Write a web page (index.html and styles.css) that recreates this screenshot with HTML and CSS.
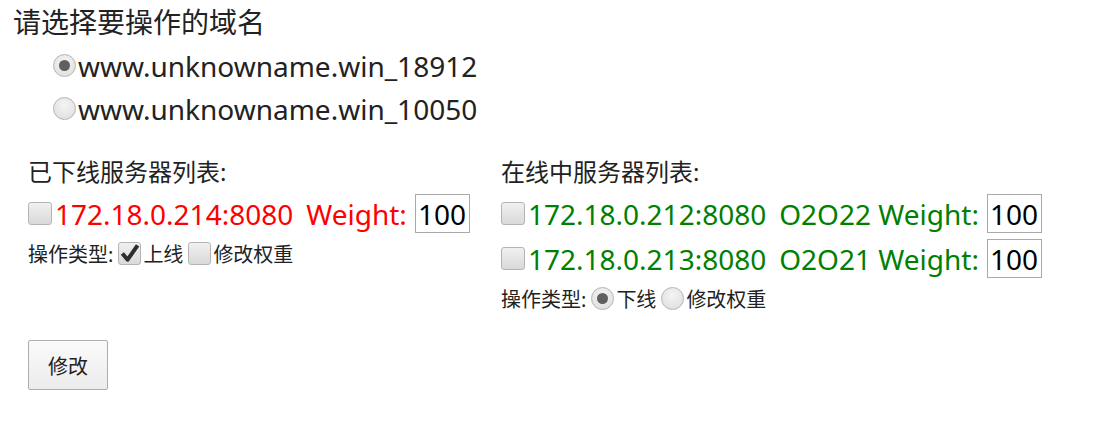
FILE: index.html
```html
<!DOCTYPE html>
<html lang="zh">
<head>
<meta charset="utf-8">
<title>域名操作</title>
<link rel="stylesheet" href="styles.css">
</head>
<body>
<div class="page">
  <div class="title">请选择要操作的域名</div>
  <div class="domains">
    <div class="domain-row"><span class="radio checked"></span><span>www.unknowname.win_18912</span></div>
    <div class="domain-row"><span class="radio"></span><span>www.unknowname.win_10050</span></div>
  </div>
  <div class="columns">
    <div class="col col-left">
      <div class="col-head">已下线服务器列表:</div>
      <div class="server red"><span class="box"></span><span class="addr">172.18.0.214:8080</span><span class="gap"></span><span>Weight:</span><span class="weight">100</span></div>
      <div class="ops"><span>操作类型:</span><span class="box small checked"><svg viewBox="0 0 22 22" width="21" height="21"><path d="M3.5 11 L9 17.5 L19.5 2.5" fill="none" stroke="#2d2d2d" stroke-width="4.2" stroke-linejoin="round"/></svg></span><span>上线</span><span class="box small"></span><span>修改权重</span></div>
    </div>
    <div class="col col-right">
      <div class="col-head">在线中服务器列表:</div>
      <div class="server green"><span class="box"></span><span class="addr">172.18.0.212:8080</span><span class="gap"></span><span>O2O22 Weight:</span><span class="weight">100</span></div>
      <div class="server green"><span class="box"></span><span class="addr">172.18.0.213:8080</span><span class="gap"></span><span>O2O21 Weight:</span><span class="weight">100</span></div>
      <div class="ops"><span>操作类型:</span><span class="radio small checked"></span><span>下线</span><span class="radio small"></span><span>修改权重</span></div>
    </div>
  </div>
  <div class="actions"><button class="btn">修改</button></div>
</div>
</body>
</html>
```
FILE: styles.css
```css
html, body {
  margin: 0;
  padding: 0;
  background: #fff;
}
body {
  font-family: "Noto Sans", "Noto Sans CJK SC", sans-serif;
  color: #222;
}
.page {
  width: 1100px;
}
.title {
  font-size: 28px;
  line-height: 44px;
  padding-left: 13px;
}
.domains {
  padding-left: 53px;
  font-size: 28px;
}
.domain-row {
  display: flex;
  align-items: center;
  height: 43px;
}
.radio {
  display: inline-block;
  box-sizing: border-box;
  width: 23px;
  height: 23px;
  border-radius: 50%;
  border: 1px solid #b4b4b4;
  background: radial-gradient(circle at 50% 35%, #f4f4f4 0%, #dcdcdc 100%);
  position: relative;
  flex: none;
  margin-right: 2px;
}
.radio.checked::after {
  content: "";
  position: absolute;
  left: 5px;
  top: 5px;
  width: 11px;
  height: 11px;
  border-radius: 50%;
  background: #5f5f5f;
}
.columns {
  display: flex;
  padding-left: 28px;
  margin-top: 25px;
}
.col-left {
  width: 473px;
}
.col-head {
  font-size: 24px;
  line-height: 34px;
  margin-bottom: 2px;
}
.server {
  display: flex;
  align-items: center;
  height: 45px;
  font-size: 28px;
}
.red { color: #f00; }
.green { color: #008000; }
.box {
  display: inline-flex;
  align-items: center;
  justify-content: center;
  box-sizing: border-box;
  width: 24px;
  height: 23px;
  border: 1px solid #b4b4b4;
  border-radius: 3px;
  background: linear-gradient(#f0f0f0, #d9d9d9);
  flex: none;
  margin-right: 3px;
}
.gap {
  width: 13px;
}
.weight {
  box-sizing: border-box;
  height: 39px;
  width: 55px;
  border: 1px solid #aaa;
  color: #000;
  margin-left: 8px;
  display: inline-flex;
  align-items: center;
  padding-left: 2px;
  overflow: hidden;
}
.ops {
  display: flex;
  align-items: center;
  font-size: 20px;
  height: 35px;
}
.ops .box, .ops .radio {
  margin-left: 5px;
  margin-right: 2px;
}
.ops .box.small {
  width: 23px;
  height: 23px;
}
.col-right .ops {
  height: 34px;
}
.actions {
  padding-left: 28px;
  margin-top: 25px;
}
.btn {
  width: 80px;
  height: 50px;
  font-family: "Noto Sans CJK SC", sans-serif;
  font-size: 20px;
  color: #222;
  border: 1px solid #adadad;
  border-radius: 2px;
  background: linear-gradient(#fafafa, #ececec);
  padding: 0;
}
```
